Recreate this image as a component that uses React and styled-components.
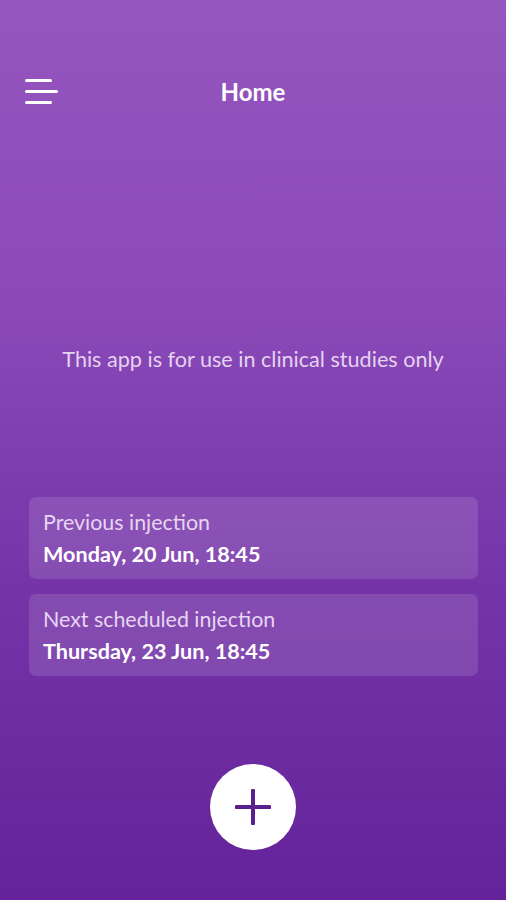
import React from "react";
import styled, { createGlobalStyle } from "styled-components";

const Global = createGlobalStyle`
  html, body { margin: 0; padding: 0; }
  body { font-family: Lato, "Open Sans", sans-serif; }
`;

const Screen = styled.div`
  width: 506px;
  height: 900px;
  box-sizing: border-box;
  background: linear-gradient(180deg, #9656bf 0%, #8a49b7 35%, #7534a8 65%, #64239a 100%);
  display: flex;
  flex-direction: column;
  align-items: stretch;
  overflow: hidden;
`;

const Header = styled.header`
  margin-top: 71px;
  height: 40px;
  display: grid;
  grid-template-columns: 80px 1fr 80px;
  align-items: center;
`;

const MenuButton = styled.button`
  background: none;
  border: 0;
  padding: 0 0 0 25px;
  display: flex;
  flex-direction: column;
  gap: 8px;
  align-items: flex-start;
  cursor: pointer;
`;

const MenuLine = styled.span`
  display: block;
  height: 3px;
  border-radius: 2px;
  background: #fff;
  width: ${(p) => p.$w}px;
`;

const Title = styled.h1`
  margin: 0;
  text-align: center;
  color: #fff;
  font-size: 24px;
  font-weight: 700;
`;

const Notice = styled.p`
  margin: 235px 0 0;
  text-align: center;
  line-height: 26px;
  font-size: 21.6px;
  color: #e4d3f1;
`;

const Cards = styled.div`
  margin: 125px 28px 0 29px;
  display: flex;
  flex-direction: column;
  gap: 15px;
`;

const Card = styled.div`
  height: 82px;
  box-sizing: border-box;
  border-radius: 7px;
  background: rgba(255, 255, 255, 0.12);
  padding: 12px 14px;
  display: flex;
  flex-direction: column;
  gap: 6px;
`;

const Label = styled.div`
  font-size: 21.4px;
  line-height: 26px;
  color: #e6d6f2;
`;

const DateText = styled.div`
  font-size: 21.6px;
  line-height: 26px;
  font-weight: 700;
  color: #fff;
`;

const AddButton = styled.button`
  margin: 88px auto 0;
  width: 86px;
  height: 86px;
  border-radius: 50%;
  border: 0;
  background: #fff;
  display: flex;
  align-items: center;
  justify-content: center;
  cursor: pointer;
  padding: 0;
`;

export default function App() {
  return (
    <>
      <Global />
      <Screen>
        <Header>
          <MenuButton aria-label="Menu">
            <MenuLine $w={27} />
            <MenuLine $w={33} />
            <MenuLine $w={27} />
          </MenuButton>
          <Title>Home</Title>
          <span />
        </Header>
        <Notice>This app is for use in clinical studies only</Notice>
        <Cards>
          <Card>
            <Label>Previous injection</Label>
            <DateText>Monday, 20 Jun, 18:45</DateText>
          </Card>
          <Card>
            <Label>Next scheduled injection</Label>
            <DateText>Thursday, 23 Jun, 18:45</DateText>
          </Card>
        </Cards>
        <AddButton aria-label="Add injection">
          <svg width="36" height="36" viewBox="0 0 36 36">
            <path d="M18 1.5V34.5M1.5 18H34.5" stroke="#5b1f8e" strokeWidth="4" strokeLinecap="round" />
          </svg>
        </AddButton>
      </Screen>
    </>
  );
}
